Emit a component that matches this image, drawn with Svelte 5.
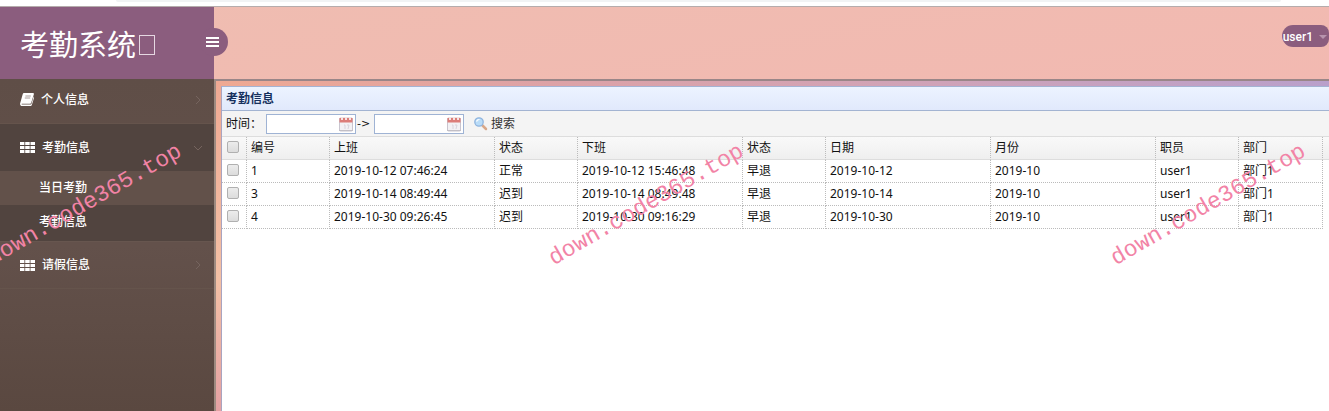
<!--
  App.svelte - attendance system, "day attendance" page

  Sidebar menu on the left, data grid with date filter on the right.
-->
<script lang="ts">
  let from = $state('');
  let to = $state('');
  let selected = $state<number[]>([]);

  const menu = [
    { label: '个人信息', icon: 'book', open: false, children: [] },
    { label: '考勤信息', icon: 'grid', open: true, children: ['当日考勤', '考勤信息'] },
    { label: '请假信息', icon: 'grid', open: false, children: [] }
  ];

  const columns = [
    { title: '编号', width: 83 },
    { title: '上班', width: 165 },
    { title: '状态', width: 83 },
    { title: '下班', width: 165 },
    { title: '状态', width: 83 },
    { title: '日期', width: 165 },
    { title: '月份', width: 165 },
    { title: '职员', width: 83 },
    { title: '部门', width: 84 }
  ];

  const rows = [
    { id: 1, cells: ['2019-10-12 07:46:24', '正常', '2019-10-12 15:46:48', '早退', '2019-10-12', '2019-10', 'user1', '部门1'] },
    { id: 3, cells: ['2019-10-14 08:49:44', '迟到', '2019-10-14 08:49:48', '早退', '2019-10-14', '2019-10', 'user1', '部门1'] },
    { id: 4, cells: ['2019-10-30 09:26:45', '迟到', '2019-10-30 09:16:29', '早退', '2019-10-30', '2019-10', 'user1', '部门1'] }
  ];

  // left edge of each stamp
  const stamps = [-26, 536, 1098];

  function toggleAll(e: Event) {
    selected = (e.currentTarget as HTMLInputElement).checked ? rows.map((r) => r.id) : [];
  }
</script>

{#snippet calendar()}
  <svg class="calendar" viewBox="0 0 16 16" aria-hidden="true">
    <rect x="1.5" y="2" width="13" height="13" rx="1" fill="#f3f1f4" stroke="#c9c5cf" />
    <path d="M1.500 2h13v4.500h-13z" fill="#dc7d79" />
    <path d="M3 1h2v3H3zM7 1h2v3H7zM11 1h2v3h-2z" fill="#f7e3e1" />
    <path d="M6 9h1v4M9 9h2l-1 4" fill="none" stroke="#d8d4dc" />
    <path d="M1 14.5h14" stroke="#c2bfc6" />
  </svg>
{/snippet}

<div class="page">
  <div class="strip"><div class="strip-bar"></div></div>

  <header class="top">
    <div class="brand">
      <h1>考勤系统<span class="box"></span></h1>
      <button class="toggle" aria-label="菜单">
        <svg viewBox="0 0 13 11" aria-hidden="true">
          <path d="M0 1h13M0 5h13M0 9h13" stroke="#fff" stroke-width="2" />
        </svg>
      </button>
    </div>
    <button class="user">
      user1
      <svg viewBox="0 0 8 4" aria-hidden="true"><path d="M0 0h8L4 4z" fill="#b794ad" /></svg>
    </button>
  </header>

  <div class="body">
    <nav class="sidebar">
      {#each menu as item}
        <a class="item" class:open={item.open} href="#menu">
          {#if item.icon === 'book'}
            <svg class="icon-book" viewBox="0 0 14 13" aria-hidden="true">
              <path d="M4.200 0h8.600c.9 0 1.300.7 1 1.500l-2.600 8.200c-.2.700-.8 1.100-1.500 1.100H2.200c-.5 0-.7.200-.6.500.1.300.4.300.8.300h7.900c.5 0 .9-.2 1.100-.7l2.300-7.500c.4.400.4.900.3 1.500l-2.100 6.800c-.2.700-.8 1.300-1.500 1.300H2.200C.8 13-.2 11.700.1 10.500L2.700 1.300C2.900.5 3.500 0 4.200 0z" fill="#fff" />
              <path d="M5.400 3h5.400M4.800 5h5.400" stroke="#8f827d" stroke-width="0.800" />
            </svg>
          {:else}
            <svg class="icon-grid" viewBox="0 0 15 11" aria-hidden="true">
              <path d="M0 0h4.400v3H0zM5.200 0h4.500v3H5.200zM10.500 0H15v3h-4.500zM0 4h4.400v3H0zM5.200 4h4.500v3H5.200zM10.500 4H15v3h-4.500zM0 8h4.400v3H0zM5.200 8h4.500v3H5.200zM10.500 8H15v3h-4.500z" fill="#fff" />
            </svg>
          {/if}
          <span>{item.label}</span>
          <svg class="chevron" viewBox="0 0 10 10" aria-hidden="true">
            <path d={item.open ? 'M1 3l4 4 4-4' : 'M3 1l4 4-4 4'} fill="none" stroke="#75645e" />
          </svg>
        </a>
        {#if item.open}
          <div class="children">
            {#each item.children as child, i}
              <a class="child" class:current={i === 0} href="#menu">{child}</a>
            {/each}
          </div>
        {/if}
      {/each}
    </nav>

    <main class="content">
      <section class="panel">
        <h2>考勤信息</h2>
        <form class="toolbar">
          <label for="from">时间：</label>
          <div class="date">
            <input id="from" type="text" bind:value={from} />
            {@render calendar()}
          </div>
          <label class="arrow" for="to">-&gt;</label>
          <div class="date">
            <input id="to" type="text" bind:value={to} />
            {@render calendar()}
          </div>
          <button class="search" type="button">
            <svg viewBox="0 0 16 16" aria-hidden="true">
              <path d="M9.500 9.500l3.500 3.500" stroke="#d9a98a" stroke-width="2.500" stroke-linecap="round" />
              <circle cx="6" cy="6" r="4.200" fill="#b9dcf8" stroke="#8fb4de" stroke-width="1.300" />
              <path d="M3.500 5.500a3 3 0 0 1 3-2" fill="none" stroke="#fff" stroke-width="1.200" />
            </svg>
            搜索
          </button>
        </form>

        <table>
          <colgroup>
            <col style="width: 25px" />
            {#each columns as col}
              <col style="width: {col.width}px" />
            {/each}
            <col />
          </colgroup>
          <thead>
            <tr>
              <th class="check">
                <input type="checkbox" aria-label="全选" checked={selected.length === rows.length} onchange={toggleAll} />
              </th>
              {#each columns as col}
                <th>{col.title}</th>
              {/each}
              <th class="rest"></th>
            </tr>
          </thead>
          <tbody>
            {#each rows as row}
              <tr>
                <td class="check">
                  <input type="checkbox" aria-label="选择 {row.id}" value={row.id} bind:group={selected} />
                </td>
                <td>{row.id}</td>
                {#each row.cells as cell}
                  <td>{cell}</td>
                {/each}
                <td class="rest"></td>
              </tr>
            {/each}
          </tbody>
        </table>
      </section>
    </main>
  </div>

  {#each stamps as left}
    <div class="stamp" style="left: {left}px">down.code365.top</div>
  {/each}
</div>

<style>
  :global(body) {
    margin: 0;
  }

  .page {
    position: relative;
    display: flex;
    flex-direction: column;
    min-height: 100vh;
    overflow: hidden;
    background: #fff;
    color: #111;
    font-family: 'Noto Sans', 'Noto Sans CJK SC', sans-serif;
    font-size: 12px;
    line-height: 16px;
  }

  .page * {
    box-sizing: border-box;
  }

  button,
  input {
    font: inherit;
    color: inherit;
  }

  .strip {
    height: 7px;
    padding: 0 48px 0 116px;
    border-bottom: 1px solid #b5acac;
  }

  .strip-bar {
    height: 2px;
    background: #f1f3f4;
    border-radius: 0 0 8px 8px;
  }

  /* Header */
  .top {
    display: flex;
    align-items: flex-start;
    justify-content: space-between;
    height: 72px;
    background: linear-gradient(170deg, #efbdb1, #f2b9b1);
  }

  .brand {
    position: relative;
    width: 214px;
    height: 72px;
    padding: 18px 20px;
    background: #8b5d7e;
  }

  .brand h1 {
    display: flex;
    align-items: center;
    margin: 0;
    color: #fff;
    font-size: 29px;
    font-weight: 400;
    line-height: 40px;
  }

  .box {
    width: 16px;
    height: 20px;
    margin-left: 3px;
    border: 1px solid #e6d8e2;
  }

  .toggle {
    position: absolute;
    top: 21px;
    right: -14px;
    width: 28px;
    height: 28px;
    padding: 0 0 0 6px;
    border: none;
    border-radius: 50%;
    background: #8b5d7e;
    text-align: left;
  }

  .toggle svg {
    display: block;
    width: 13px;
    height: 11px;
  }

  .user {
    display: flex;
    align-items: center;
    gap: 6px;
    height: 22px;
    margin-top: 18px;
    padding: 2px 2px 0 1px;
    border: none;
    border-radius: 11px 8px 8px 11px;
    background: #8b5d7e;
    color: #fff;
    font-family: Roboto, sans-serif;
    font-weight: 500;
  }

  .user svg {
    width: 8px;
    height: 4px;
  }

  .body {
    display: flex;
    flex: 1;
  }

  /* Sidebar */
  .sidebar {
    flex: none;
    width: 214px;
    background: linear-gradient(#5f4e47, #63514b 50%, #5a4840);
    font-weight: 500;
  }

  .sidebar a {
    color: #fff;
    text-decoration: none;
  }

  .item {
    display: flex;
    align-items: center;
    gap: 7px;
    height: 47px;
    padding: 0 11px 0 20px;
    border-bottom: 1px solid #65544c;
  }

  .item:first-child {
    height: 45px;
    padding-bottom: 3px;
  }

  .item.open {
    background: #51443f;
    border-bottom: none;
  }

  .icon-book {
    width: 14px;
    height: 13px;
  }

  .icon-grid {
    width: 15px;
    height: 11px;
  }

  .chevron {
    width: 10px;
    height: 10px;
    margin-left: auto;
  }

  .children {
    padding-bottom: 2px;
    background: #51443f;
    border-bottom: 1px solid #67564f;
  }

  .child {
    display: block;
    padding: 9px 0 9px 39px;
  }

  .child.current {
    background: #62514a;
  }

  /* Content */
  .content {
    display: flex;
    flex: 1;
    min-width: 0;
    padding: 5px 0 0 5px;
    border-top: 2px solid #9a8688;
    border-left: 2px solid #9d8a80;
    background:
      linear-gradient(90deg, #efa993, #dda2a6 30%, #cfa3b8 65%, #b9a0cb) top / 100% 5px no-repeat,
      linear-gradient(#efa993, #f3c0a5 60%, #e4a1a3);
  }

  .panel {
    flex: 1;
    min-width: 0;
    border-top: 1px solid #a4b3d3;
    border-left: 1px solid #a9a4c0;
    background: #fff;
  }

  h2 {
    margin: 0;
    padding: 4px 4px 3px;
    border-bottom: 1px solid #a3b4d2;
    background: linear-gradient(#ecf3ff, #e1e9fc);
    color: #16305e;
    font-size: 12px;
    line-height: 16px;
  }

  .toolbar {
    display: flex;
    align-items: center;
    height: 26px;
    padding: 0 4px;
    border-bottom: 1px solid #ddd;
    background: #f4f4f4;
  }

  .toolbar label:first-child {
    width: 40px;
  }

  .toolbar .arrow {
    width: 18px;
    padding-left: 1px;
    font-family: 'DejaVu Sans', sans-serif;
    font-size: 11px;
  }

  .date {
    position: relative;
    width: 90px;
  }

  .date input {
    display: block;
    width: 100%;
    height: 20px;
    padding: 0 20px 0 4px;
    border: 1px solid #9fb3d4;
    background: #fff;
  }

  .calendar {
    position: absolute;
    top: 2px;
    right: 2px;
    width: 16px;
    height: 16px;
  }

  .search {
    display: flex;
    align-items: center;
    gap: 2px;
    margin-left: 5px;
    padding: 0 4px;
    border: none;
    background: none;
    color: #333;
  }

  .search svg {
    width: 16px;
    height: 16px;
  }

  /* Grid */
  table {
    width: 100%;
    border-collapse: separate;
    border-spacing: 0;
    table-layout: fixed;
  }

  th,
  td {
    height: 23px;
    padding: 0 4px;
    border-right: 1px dotted #bbb;
    border-bottom: 1px dotted #bbb;
    font-weight: 400;
    text-align: left;
    white-space: nowrap;
  }

  th {
    border-bottom: 1px solid #ddd;
    background: linear-gradient(#f9f9f9, #efefef);
  }

  td.rest {
    border: none;
  }

  th.rest {
    border-right: none;
  }

  .rest {
    padding: 0;
  }

  .check input {
    display: block;
    appearance: none;
    width: 12px;
    height: 12px;
    margin: 0 0 2px 1px;
    border: 1px solid #b0b0b0;
    border-radius: 2px;
    background: linear-gradient(#ececec, #dcdcdc);
  }

  .check input:checked {
    background: #6f8fc4;
  }

  /* Stamps */
  .stamp {
    position: absolute;
    top: 191px;
    color: #f283a6;
    font-family: 'Liberation Mono', monospace;
    font-size: 23px;
    line-height: 28px;
    white-space: nowrap;
    transform: rotate(-30deg);
    pointer-events: none;
  }
</style>
